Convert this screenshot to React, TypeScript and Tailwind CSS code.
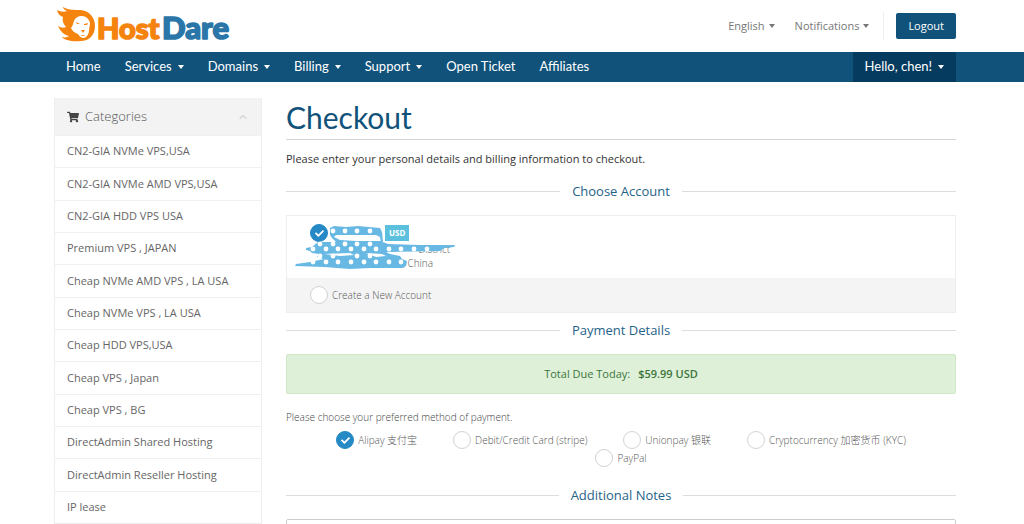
import React from 'react';
import { FaCheck, FaShoppingCart } from 'react-icons/fa';
import { ChevronUp } from 'lucide-react';

const navItems = [
  { label: 'Home', menu: false },
  { label: 'Services', menu: true },
  { label: 'Domains', menu: true },
  { label: 'Billing', menu: true },
  { label: 'Support', menu: true },
  { label: 'Open Ticket', menu: false },
  { label: 'Affiliates', menu: false },
];

const categories = [
  'CN2-GIA NVMe VPS,USA',
  'CN2-GIA NVMe AMD VPS,USA',
  'CN2-GIA HDD VPS USA',
  'Premium VPS , JAPAN',
  'Cheap NVMe AMD VPS , LA USA',
  'Cheap NVMe VPS , LA USA',
  'Cheap HDD VPS,USA',
  'Cheap VPS , Japan',
  'Cheap VPS , BG',
  'DirectAdmin Shared Hosting',
  'DirectAdmin Reseller Hosting',
  'IP lease',
];

const paymentMethods = [
  'Alipay 支付宝',
  'Debit/Credit Card (stripe)',
  'Unionpay 银联',
  'Cryptocurrency 加密货币 (KYC)',
  'PayPal',
];

// Centres of the white dots in the privacy scribble, row by row
const scribbleDots = [
  { y: 13, xs: [43, 55, 67, 80] },
  { y: 26, xs: [30, 43, 55, 67, 80] },
  { y: 31, xs: [23, 36, 48, 61, 74, 86, 99, 111, 124, 137] },
  { y: 38, xs: [30, 43, 67, 80] },
  { y: 44, xs: [23, 36, 48, 61, 74, 86, 99, 111] },
];

const Caret: React.FC = () => (
  <span className="inline-block border-x-[3px] border-t-[4px] border-x-transparent border-t-current" />
);

const Logo: React.FC = () => (
  <a href="#home" aria-label="HostDare" className="block">
    <svg width="180" height="40" viewBox="0 0 180 40">
      <path
        d="M3 4 C7 6 10 6 13 5 C10 4 9 2 9 1 C14 4 20 4 27 4 C36 5 41 12 41 20 C41 29 35 35 27 35 C18 36 10 34 8 31 C11 32 14 31 15 30 C10 29 6 25 4 20 C7 22 10 22 12 21 C9 18 8 14 9 11 C6 10 4 8 3 4 Z"
        fill="#f5840f"
      />
      <path
        d="M20 15 C21 12 24 10 28 10 C32 10 35 13 36 17 C36 20 35 22 35 24 C35 28 33 31 30 32 C27 32 25 30 24 28 C21 27 18 25 17 22 C19 20 19 17 20 15 Z"
        fill="#ffffff"
      />
      <path
        d="M22 16 L26 18 L23 18 Z M30 18 L34 17 L33 19 L30 19 Z M27 24 L31 24 L29 27 Z M26 29 L32 29 L29 30 Z"
        fill="#f5840f"
      />
      <g fontFamily="Lato, sans-serif" fontWeight="900" fontSize="29" strokeWidth="1.6" strokeLinejoin="round">
        <text x="43" y="33" fill="#f5840f" stroke="#f5840f">Host</text>
        <text x="108" y="33" fontSize="31" fill="#2a76a8" stroke="#2a76a8">Dare</text>
      </g>
    </svg>
  </a>
);

const Scribble: React.FC = () => (
  <svg className="absolute top-[2px] left-[3px] h-14 w-[170px]" viewBox="0 0 170 56" aria-hidden="true">
    <path
      d="M40 10 L44 8 L56 9 L68 8 L90 10 L92 14 L93 24 L91 25 L90 19 L86 17 L46 17 L44 19 L50 22 L66 23 L90 23 L98 26 L130 27 L165 27 L164 29 L154 30 L150 33 L96 34 L100 36 L110 38 L112 41 L117 43 L116 48 L112 50 L80 50 L60 51 L34 49 L5 48 L6 46 L20 44 L34 41 L27 39 L29 36 L22 35 L20 33 L16 32 L16 30 L22 29 L28 24 L46 24 L42 20 L40 17 Z"
      fill="#68b8e4"
    />
    <path d="M34 36 L60 35 L64 37 L50 38 Z M76 35 L92 36 L96 38 L86 39 Z" fill="#ffffff" />
    {scribbleDots.map((row) =>
      row.xs.map((x) => <circle key={`${x}-${row.y}`} cx={x} cy={row.y} r="2.4" fill="#ffffff" />)
    )}
  </svg>
);

const SectionTitle: React.FC<{ id?: string; children: React.ReactNode }> = ({ id, children }) => (
  <h2 id={id} className="flex items-center gap-3 text-[13px] leading-[18px] text-[#1f6389]">
    <span className="h-px flex-1 bg-[#dddddd]" />
    {children}
    <span className="h-px flex-1 bg-[#dddddd]" />
  </h2>
);

const Radio: React.FC<{ name: string; checked?: boolean; label?: string; children?: React.ReactNode }> = ({
  name,
  checked,
  label,
  children,
}) => (
  <label className="inline-flex items-center gap-1 text-[10px] leading-[18px] font-light text-[#555555]">
    <span className="grid h-[18px] w-[18px] shrink-0 place-items-center">
      <input
        type="radio"
        name={name}
        aria-label={label}
        defaultChecked={checked}
        className="peer col-start-1 row-start-1 h-[18px] w-[18px] appearance-none rounded-full border border-[#d2d2d2] bg-white checked:border-[#2489c5] checked:bg-[#2489c5]"
      />
      <FaCheck className="pointer-events-none z-10 col-start-1 row-start-1 hidden h-[9px] w-[9px] text-white peer-checked:block" />
    </span>
    {children}
  </label>
);

const App: React.FC = () => (
  <div className="bg-white font-['Open_Sans','Noto_Sans_CJK_SC',sans-serif] text-[#555555]">
    <header className="flex h-[52px] items-center justify-between pr-[68px] pl-[54px]">
      <Logo />
      <div className="flex h-7 items-center text-[11px] text-[#777777]">
        <button className="mr-5 flex items-center gap-1">English <Caret /></button>
        <button className="mr-3.5 flex items-center gap-1">Notifications <Caret /></button>
        <span className="mr-3 h-full w-px bg-[#eeeeee]" />
        <a href="#logout" className="rounded-xs bg-[#11527a] px-3 py-1 leading-[18px] text-white">Logout</a>
      </div>
    </header>

    <nav className="flex h-[30px] items-center justify-between bg-[#11527a] pr-[68px] pl-[54px] font-[Lato,sans-serif] text-[13px] text-white">
      <div className="flex">
        {navItems.map((item) => (
          <a key={item.label} href="#nav" className="flex items-center gap-1.5 px-3">
            {item.label}
            {item.menu && <Caret />}
          </a>
        ))}
      </div>
      <button className="flex h-full items-center gap-1.5 bg-[#053b5f] px-3">Hello, chen! <Caret /></button>
    </nav>

    <div className="flex items-start gap-6 pt-4 pr-[68px] pl-[54px]">
      <aside className="w-[208px] shrink-0 border-x border-b border-[#eeeeee]">
        <h3 className="flex h-[37px] items-center gap-1.5 bg-[#f3f3f3] px-3 text-[13px] font-light text-[#555555]">
          <FaShoppingCart className="h-3 w-3 text-[#444444]" />
          Categories
          <ChevronUp className="ml-auto h-3 w-3 text-[#bbbbbb]" />
        </h3>
        <ul className="grid min-h-[388px] auto-rows-fr text-[11px] text-[#666666]">
          {categories.map((category) => (
            <li key={category} className="flex items-center border-t border-[#f0f0f0] px-3">
              <a href="#category">{category}</a>
            </li>
          ))}
        </ul>
      </aside>

      <main className="min-w-0 flex-1">
        <h1 className="border-b border-[#d4d4d4] pb-[3px] font-[Lato,sans-serif] text-[30px] leading-[38px] text-[#11527a]">Checkout</h1>
        <p className="mt-2 mb-3 text-[11px] leading-[22px] text-[#333333]">
          Please enter your personal details and billing information to checkout.
        </p>

        <SectionTitle>Choose Account</SectionTitle>
        <div className="mt-[15px] mb-2 border border-[#eeeeee]">
          <div className="relative h-[62px] pt-2 pl-[23px]">
            <div className="flex h-[18px] items-center">
              <Radio name="account" label="Current account" checked />
              <span className="ml-[57px] bg-[#5bc0de] px-1 text-[8px] leading-4 font-bold text-white">USD</span>
            </div>
            <p className="w-[140px] text-right text-[10px] leading-[14px] font-light">District</p>
            <p className="w-[123px] text-right text-[10px] leading-[14px] font-light">2, China</p>
            <Scribble />
          </div>
          <div className="flex h-[34px] items-center bg-[#f4f4f4] pl-[23px]">
            <Radio name="account">Create a New Account</Radio>
          </div>
        </div>

        <SectionTitle>Payment Details</SectionTitle>
        <div className="mt-[15px] flex h-10 items-center justify-center gap-2 rounded-xs border border-[#d0e9c6] bg-[#dff0d8] text-[11px] text-[#3c763d]">
          Total Due Today: <strong className="font-semibold">$59.99 USD</strong>
        </div>
        <p className="mt-3.5 mb-[5px] text-[10px] leading-[18px] font-light text-[#444444]">Please choose your preferred method of payment.</p>
        <div className="mb-[19px] flex flex-wrap justify-center gap-x-9 px-6">
          {paymentMethods.map((method, index) => (
            <Radio key={method} name="payment" checked={index === 0}>{method}</Radio>
          ))}
        </div>

        <SectionTitle id="notes-title">Additional Notes</SectionTitle>
        <textarea aria-labelledby="notes-title" rows={4} className="mt-[15px] block w-full rounded-xs border border-[#cccccc] p-2 text-[11px]" />
      </main>
    </div>
  </div>
);

export default App;
